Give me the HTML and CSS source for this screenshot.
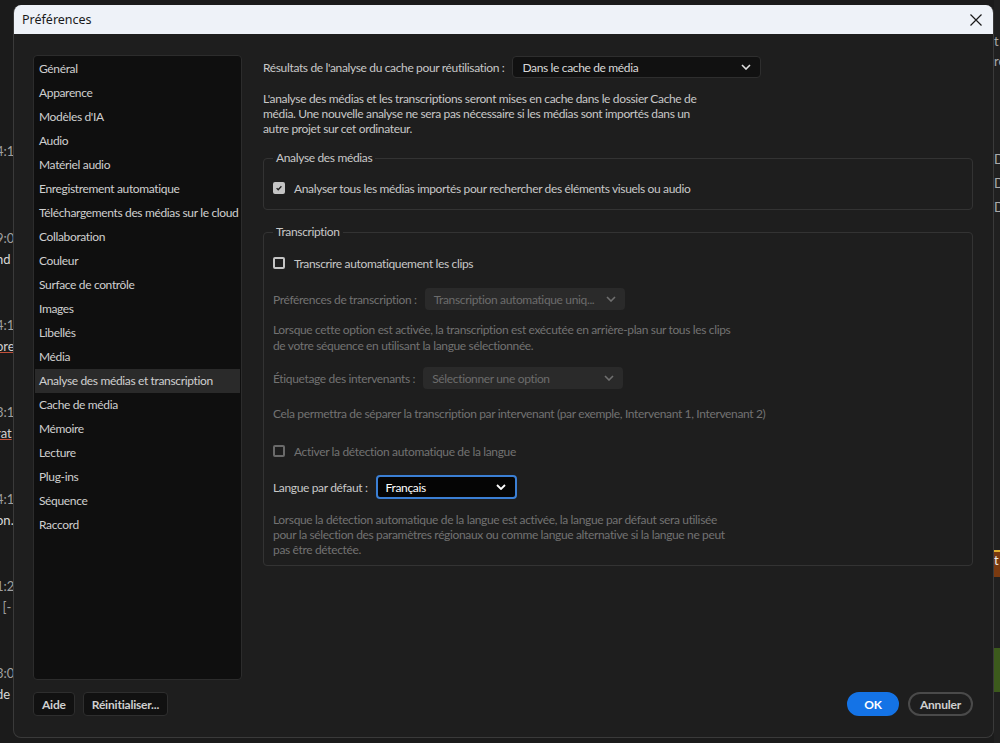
FILE: index.html
```html
<!doctype html>
<html lang="fr">
  <head>
    <meta charset="UTF-8" />
    <title>Préférences</title>
    <link rel="stylesheet" href="styles.css">
  </head>
  <body>
    <!-- application behind the dialog -->
    <div class="app-bg">
      <div class="app-left">
        <div class="frag-group"><span>4:1</span><span></span></div>
        <div class="frag-group"><span>9:0</span><span class="light">nd</span></div>
        <div class="frag-group"><span>4:1</span><span class="link">ore</span></div>
        <div class="frag-group"><span>3:1</span><span class="link">rat</span></div>
        <div class="frag-group"><span>4:1</span><span class="light">on.</span></div>
        <div class="frag-group"><span>1:2</span><span>: [-</span></div>
        <div class="frag-group"><span>3:0</span><span class="light">de</span></div>
      </div>
      <div class="app-right">
        <span class="r-top">t</span>
        <span class="r-top2">re</span>
        <span class="r-d">D</span>
        <span class="r-d">D</span>
        <span class="r-d">D</span>
        <div class="r-orange">t</div>
        <div class="r-green"></div>
      </div>
    </div>

    <div class="dialog">
      <div class="titlebar">
        <span class="title">Préférences</span>
        <svg class="close" width="12" height="12" viewBox="0 0 12 12">
          <path d="M0.5 0.5L11.5 11.5M11.5 0.5L0.5 11.5" stroke="#1a1a1a" stroke-width="1.2" fill="none" />
        </svg>
      </div>

      <div class="dialog-body">
        <div class="side">
          <ul class="nav">
            <li>Général</li>
            <li>Apparence</li>
            <li>Modèles d'IA</li>
            <li>Audio</li>
            <li>Matériel audio</li>
            <li>Enregistrement automatique</li>
            <li>Téléchargements des médias sur le cloud</li>
            <li>Collaboration</li>
            <li>Couleur</li>
            <li>Surface de contrôle</li>
            <li>Images</li>
            <li>Libellés</li>
            <li>Média</li>
            <li class="active">Analyse des médias et transcription</li>
            <li>Cache de média</li>
            <li>Mémoire</li>
            <li>Lecture</li>
            <li>Plug-ins</li>
            <li>Séquence</li>
            <li>Raccord</li>
          </ul>
          <div class="side-buttons">
            <button class="btn">Aide</button>
            <button class="btn">Réinitialiser...</button>
          </div>
        </div>

        <div class="main">
          <div class="row first-row">
            <span class="label">Résultats de l'analyse du cache pour réutilisation :</span>
            <div class="select select-cache">
              <span>Dans le cache de média</span>
              <svg width="10" height="6" viewBox="0 0 10 6"><path d="M1 1l4 4 4-4" stroke="#e0e0e0" stroke-width="1.6" fill="none" /></svg>
            </div>
          </div>
          <p class="note note-top">
            L'analyse des médias et les transcriptions seront mises en cache dans le dossier Cache de<br />
            média. Une nouvelle analyse ne sera pas nécessaire si les médias sont importés dans un<br />
            autre projet sur cet ordinateur.
          </p>

          <fieldset class="group group-media">
            <legend>Analyse des médias</legend>
            <label class="check">
              <span class="box checked">
                <svg width="10" height="10" viewBox="0 0 10 10"><path d="M2 5.2l2 2 4-4.4" stroke="#1e1e1e" stroke-width="1.6" fill="none" /></svg>
              </span>
              Analyser tous les médias importés pour rechercher des éléments visuels ou audio
            </label>
          </fieldset>

          <fieldset class="group group-transcription">
            <legend>Transcription</legend>
            <label class="check">
              <span class="box"></span>
              Transcrire automatiquement les clips
            </label>

            <div class="row dim row-prefs">
              <span class="label">Préférences de transcription :</span>
              <div class="select select-disabled">
                <span>Transcription automatique uniq...</span>
                <svg width="10" height="6" viewBox="0 0 10 6"><path d="M1 1l4 4 4-4" stroke="#6f6f6f" stroke-width="1.6" fill="none" /></svg>
              </div>
            </div>
            <p class="note dim note-prefs">
              Lorsque cette option est activée, la transcription est exécutée en arrière-plan sur tous les clips<br />
              de votre séquence en utilisant la langue sélectionnée.
            </p>

            <div class="row dim row-speakers">
              <span class="label">Étiquetage des intervenants :</span>
              <div class="select select-disabled">
                <span>Sélectionner une option</span>
                <svg width="10" height="6" viewBox="0 0 10 6"><path d="M1 1l4 4 4-4" stroke="#6f6f6f" stroke-width="1.6" fill="none" /></svg>
              </div>
            </div>
            <p class="note dim note-speakers">
              Cela permettra de séparer la transcription par intervenant (par exemple, Intervenant 1, Intervenant 2)
            </p>

            <label class="check dim check-lang">
              <span class="box box-dim"></span>
              Activer la détection automatique de la langue
            </label>

            <div class="row row-lang">
              <span class="label">Langue par défaut :</span>
              <div class="select select-focus">
                <span>Français</span>
                <svg width="10" height="6" viewBox="0 0 10 6"><path d="M1 1l4 4 4-4" stroke="#ffffff" stroke-width="1.8" fill="none" /></svg>
              </div>
            </div>
            <p class="note dim note-lang">
              Lorsque la détection automatique de la langue est activée, la langue par défaut sera utilisée<br />
              pour la sélection des paramètres régionaux ou comme langue alternative si la langue ne peut<br />
              pas être détectée.
            </p>
          </fieldset>

          <div class="footer">
            <button class="pill primary">OK</button>
            <button class="pill">Annuler</button>
          </div>
        </div>
      </div>
    </div>
  </body>
</html>
```

FILE: styles.css
```css
* {
  box-sizing: border-box;
}

body {
  margin: 0;
  width: 1000px;
  height: 743px;
  overflow: hidden;
  background: #1b1b1b;
  font-family: "Lato", "Open Sans", sans-serif;
  font-size: 12px;
  letter-spacing: -0.35px;
  color: #c8c8c8;
  position: relative;
}

/* background application */
.app-bg {
  position: absolute;
  inset: 0;
}

.app-left {
  position: absolute;
  left: -4px;
  top: 141px;
  width: 17px;
  display: flex;
  flex-direction: column;
  font-size: 13px;
  letter-spacing: 0;
  color: #a0a0a0;
}

.frag-group {
  display: flex;
  flex-direction: column;
  height: 87px;
}

.frag-group span {
  height: 21px;
  line-height: 21px;
  white-space: nowrap;
}

.frag-group .light {
  color: #d8d8d8;
}

.frag-group .link {
  color: #d0d0d0;
  text-decoration: underline;
  text-decoration-color: #c0503a;
}

.app-right {
  position: absolute;
  left: 994px;
  top: 0;
  width: 6px;
  height: 743px;
  display: flex;
  flex-direction: column;
  font-size: 13px;
  letter-spacing: 0;
  color: #aaa;
  background: #202020;
}

.r-top {
  margin-top: 33px;
  height: 20px;
}

.r-top2 {
  height: 22px;
  margin-bottom: 72px;
}

.r-d {
  height: 24px;
  line-height: 24px;
}

.r-orange {
  margin-top: 331px;
  height: 27px;
  background: #7a3a10;
  border-top: 2px solid #e0b030;
  color: #eee;
}

.r-green {
  margin-top: 71px;
  height: 44px;
  background: #3c5a1c;
}

/* dialog window */
.dialog {
  position: absolute;
  left: 13px;
  top: 5px;
  width: 981px;
  height: 733px;
  background: #1e1e1e;
  border: 1px solid #3a3a3a;
  border-top: none;
  border-radius: 8px;
  display: flex;
  flex-direction: column;
  overflow: hidden;
}

.titlebar {
  height: 29px;
  background: #eef2f8;
  display: flex;
  align-items: center;
  justify-content: space-between;
  padding: 0 11px 0 8px;
  flex-shrink: 0;
}

.title {
  font-family: "Noto Sans", sans-serif;
  font-size: 12.5px;
  letter-spacing: 0;
  color: #1a1a1a;
}

.dialog-body {
  flex: 1;
  display: flex;
  padding: 21px 20px 21px 19px;
  gap: 21px;
}

/* sidebar */
.side {
  width: 209px;
  display: flex;
  flex-direction: column;
}

.nav {
  list-style: none;
  margin: 0;
  padding: 1px 1px;
  height: 625px;
  background: #0f0f0f;
  border: 1px solid #2c2c2c;
  border-radius: 4px;
}

.nav li {
  height: 24px;
  line-height: 24px;
  padding-left: 4px;
  color: #cfcfcf;
  white-space: nowrap;
}

.nav li.active {
  background: #2a2a2a;
}

.side-buttons {
  display: flex;
  gap: 8px;
  margin-top: 12px;
}

.btn {
  font-family: inherit;
  font-size: 12px;
  font-weight: 700;
  letter-spacing: -0.2px;
  color: #cfcfcf;
  background: #111;
  border: 1px solid #2e2e2e;
  border-radius: 4px;
  height: 24px;
  padding: 0 8px;
}

/* main column */
.main {
  flex: 1;
  display: flex;
  flex-direction: column;
}

.row {
  display: flex;
  align-items: center;
  gap: 8px;
}

.first-row {
  margin-top: 1px;
}

.label {
  white-space: nowrap;
}

.select {
  display: flex;
  align-items: center;
  justify-content: space-between;
  height: 22px;
  padding: 0 9px 0 9px;
  border-radius: 4px;
  white-space: nowrap;
}

.select-cache {
  width: 249px;
  background: #111;
  border: 1px solid #2e2e2e;
  color: #d8d8d8;
}

.select-disabled {
  width: 200px;
  background: #2a2a2a;
  color: #6c6c6c;
}

.select-focus {
  width: 141px;
  height: 24px;
  background: #050505;
  border: 2px solid #3b7fd4;
  color: #fff;
  padding-left: 8px;
}

.note {
  margin: 0;
  line-height: 15px;
}

.note-top {
  margin-top: 13px;
}

.dim {
  color: #727272;
}

.group {
  margin: 0;
  border: 1px solid #333;
  border-radius: 4px;
  padding: 0 9px 0 9px;
}

.group legend {
  padding: 0 3px;
  line-height: 16px;
  color: #c8c8c8;
}

.group-media {
  margin-top: 14px;
  padding-top: 12px;
  padding-bottom: 11px;
}

.group-transcription {
  margin-top: 14px;
  padding-top: 13px;
  padding-bottom: 8px;
}

.check {
  display: flex;
  align-items: center;
  gap: 9px;
  height: 20px;
}

.box {
  width: 12px;
  height: 12px;
  border: 2px solid #c4c4c4;
  border-radius: 2px;
  background: #1e1e1e;
  display: flex;
  align-items: center;
  justify-content: center;
}

.box.checked {
  background: #c4c4c4;
}

.box-dim {
  border-color: #6a6a6a;
}

.row-prefs {
  margin-top: 15px;
}

.note-prefs {
  margin-top: 12px;
  line-height: 16px;
}

.row-speakers {
  margin-top: 13px;
}

.note-speakers {
  margin-top: 17px;
  line-height: 16px;
}

.check-lang {
  margin-top: 19px;
}

.row-lang {
  margin-top: 14px;
}

.note-lang {
  margin-top: 13px;
}

.footer {
  margin-top: auto;
  display: flex;
  justify-content: flex-end;
  gap: 9px;
}

.pill {
  font-family: inherit;
  font-size: 12px;
  font-weight: 700;
  letter-spacing: -0.2px;
  height: 24px;
  border-radius: 12px;
  padding: 0 10px;
  background: transparent;
  color: #cfcfcf;
  border: 2px solid #4a4a4a;
}

.pill.primary {
  width: 52px;
  background: #1473e6;
  border-color: #1473e6;
  color: #fff;
}
```
